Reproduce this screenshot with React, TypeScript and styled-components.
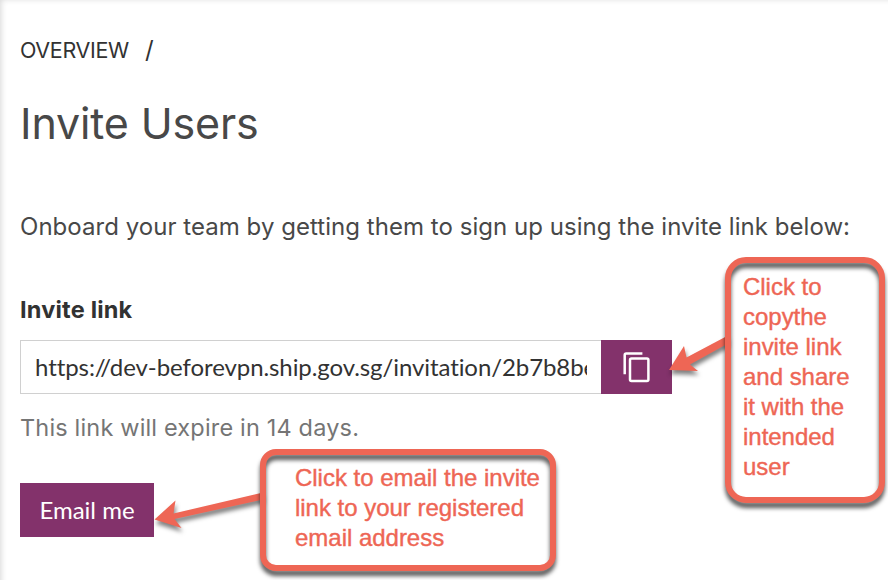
import React from "react";
import styled, { createGlobalStyle } from "styled-components";

const coral = "#ee6655";
const plum = "#83326b";

const GlobalStyle = createGlobalStyle`
  *, *::before, *::after { box-sizing: border-box; }
  body { margin: 0; background: #fff; overflow: hidden; }
`;

const Page = styled.main`
  position: relative;
  width: 888px;
  height: 580px;
  padding: 36px 20px 0;
  overflow: hidden;
  background: #fff;
  box-shadow: inset 6px 4px 6px -5px rgba(0, 0, 0, 0.16);
  font-family: Inter, "Noto Sans", sans-serif;
  color: #484848;
  white-space: nowrap;
`;

const Breadcrumb = styled.nav`
  display: flex;
  gap: 17px;
  height: 28px;
  font-size: 21.5px;
  line-height: 28px;
  letter-spacing: -0.35px;
  color: #323232;
`;

const Slash = styled.span`
  margin-left: -1px;
  font-size: 24px;
`;

const Title = styled.h1`
  height: 56px;
  margin: 31px 0 0;
  font-size: 43px;
  font-weight: 400;
  line-height: 56px;
  letter-spacing: -0.15px;
`;

const Intro = styled.p`
  height: 32px;
  margin: 60px 0 0;
  font-size: 24px;
  line-height: 32px;
  letter-spacing: 0.04px;
`;

const Label = styled.label`
  display: block;
  height: 30px;
  margin-top: 52px;
  font-size: 23.5px;
  font-weight: 700;
  line-height: 30px;
  letter-spacing: 0.2px;
  color: #323232;
`;

const LinkRow = styled.div`
  display: flex;
  width: 652px;
  height: 54px;
  margin-top: 15px;
`;

const LinkField = styled.div`
  width: 581px;
  padding: 0 14px;
  border: 1px solid #d0d0d0;
  border-right: 0;
  font-family: Lato, sans-serif;
  font-size: 24px;
  line-height: 51px;
  font-variant-ligatures: none;
  letter-spacing: -0.08px;
  color: #323232;
`;

const LinkText = styled.div`
  overflow: hidden;
`;

const Button = styled.button<{ $width: number }>`
  display: flex;
  align-items: center;
  justify-content: center;
  width: ${(p) => p.$width}px;
  height: 54px;
  padding: 0 0 1px;
  border: 0;
  background: ${plum};
  color: #fff;
  font-family: Lato, sans-serif;
  font-size: 24px;
`;

const Hint = styled.p`
  height: 32px;
  margin: 18px 0 39px;
  font-size: 23.5px;
  line-height: 32px;
  letter-spacing: 0.17px;
  color: #757575;
`;

const Annotations = styled.div`
  position: absolute;
  inset: 0;
  pointer-events: none;
`;

const Arrows = styled.svg`
  position: absolute;
  inset: 0;
  fill: ${coral};
  filter: drop-shadow(1px 4px 2px rgba(0, 0, 0, 0.5));
`;

const Callout = styled.div<{
  $x: number; $y: number; $w: number; $h: number; $radius: number; $indent: number; $top: number;
}>`
  position: absolute;
  left: ${(p) => p.$x}px;
  top: ${(p) => p.$y}px;
  width: ${(p) => p.$w}px;
  height: ${(p) => p.$h}px;
  padding: ${(p) => p.$top}px 0 0 ${(p) => p.$indent}px;
  font-family: "Liberation Sans", Arial, sans-serif;
  font-size: 24px;
  line-height: 30px;
  color: ${coral};
  -webkit-text-stroke: 0.4px ${coral};

  &::before {
    content: "";
    position: absolute;
    inset: 0;
    border: 6px solid ${coral};
    border-radius: ${(p) => p.$radius}px;
    filter: drop-shadow(0 5px 2px rgba(0, 0, 0, 0.65));
  }
`;

const Line = styled.div`
  position: relative;
  letter-spacing: -0.02px;
`;

function CopyIcon() {
  return (
    <svg width="30" height="32" viewBox="0 0 30 32" fill="none" stroke="#fff" strokeWidth="2.5">
      <path d="M20.4 2.4H4.2Q2.7 2.4 2.7 3.9V23.2" />
      <rect x="8" y="7.6" width="18.4" height="22.4" rx="1.5" />
    </svg>
  );
}

export default function App() {
  return (
    <>
      <GlobalStyle />
      <Page>
        <Breadcrumb>
          <span>OVERVIEW</span>
          <Slash>/</Slash>
        </Breadcrumb>
        <Title>Invite Users</Title>
        <Intro>Onboard your team by getting them to sign up using the invite link below:</Intro>
        <Label>Invite link</Label>
        <LinkRow>
          <LinkField>
            <LinkText>https://dev-beforevpn.ship.gov.sg/invitation/2b7b8be</LinkText>
          </LinkField>
          <Button $width={71} aria-label="Copy invite link">
            <CopyIcon />
          </Button>
        </LinkRow>
        <Hint>This link will expire in 14 days.</Hint>
        <Button $width={134}>Email me</Button>
        <Annotations>
          <Arrows width="888" height="580" viewBox="0 0 888 580">
            <path d="M669 370L684 346L686.5 357.5L728 335.5V343.5L690 364.5L698 371Z" />
            <path d="M154.5 519.5L175.5 500.5L173.5 513.5L263 492.5V499.5L174.5 519L181.5 528Z" />
          </Arrows>
          <Callout $x={725} $y={257} $w={160} $h={246} $radius={21} $indent={18} $top={15}>
            <Line>Click to</Line>
            <Line>copythe</Line>
            <Line>invite link</Line>
            <Line>and share</Line>
            <Line>it with the</Line>
            <Line>intended</Line>
            <Line>user</Line>
          </Callout>
          <Callout $x={260} $y={449} $w={296} $h={122} $radius={16} $indent={35} $top={14}>
            <Line>Click to email the invite</Line>
            <Line>link to your registered</Line>
            <Line>email address</Line>
          </Callout>
        </Annotations>
      </Page>
    </>
  );
}
